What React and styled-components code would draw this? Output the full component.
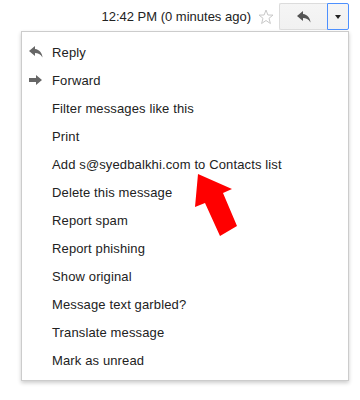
import React from "react";
import styled, { createGlobalStyle } from "styled-components";

const GlobalStyle = createGlobalStyle`
  html, body {
    margin: 0;
    padding: 0;
    background: #ffffff;
  }
  body {
    font-family: "Liberation Sans", Arial, sans-serif;
    font-size: 13px;
    color: #222222;
  }
`;

const Page = styled.div`
  position: relative;
  width: 360px;
  height: 400px;
  overflow: hidden;
`;

const Header = styled.div`
  display: flex;
  align-items: center;
  justify-content: flex-end;
  height: 27px;
  padding: 3px 11px 0 0;
`;

const Time = styled.span`
  font-size: 13px;
  color: #222222;
  margin-right: 7px;
`;

const StarBox = styled.span`
  display: flex;
  width: 16px;
  height: 16px;
  margin-right: 5px;
`;

const BtnGroup = styled.div`
  display: flex;
  height: 27px;
`;

const Btn = styled.button`
  display: flex;
  align-items: center;
  justify-content: center;
  width: ${(p) => p.$w}px;
  height: 27px;
  padding: 0;
  margin: 0;
  box-sizing: border-box;
  background: linear-gradient(#f5f5f5, #f1f1f1);
  border: 1px solid ${(p) => (p.$focus ? "#4d90fe" : "#dcdcdc")};
  border-radius: ${(p) => (p.$focus ? "0 2px 2px 0" : "2px 0 0 2px")};
  ${(p) => (p.$focus ? "" : "border-right: none;")}
`;

const Caret = styled.span`
  width: 0;
  height: 0;
  border-left: 3.5px solid transparent;
  border-right: 3.5px solid transparent;
  border-top: 4px solid #222;
`;

const Menu = styled.div`
  margin: 1px 0 0 21px;
  width: 328px;
  box-sizing: border-box;
  padding: 6px 0;
  background: #ffffff;
  border: 1px solid rgba(0, 0, 0, 0.2);
  box-shadow: 0 2px 4px rgba(0, 0, 0, 0.2);
`;

const Item = styled.div`
  display: flex;
  align-items: center;
  height: 28px;
  padding-left: 7px;
  color: #222222;
  font-size: 13px;
  letter-spacing: 0.13px;
  white-space: nowrap;
`;

const IconSlot = styled.span`
  display: flex;
  align-items: center;
  width: 23px;
  height: 28px;
`;

const Arrow = styled.svg`
  position: absolute;
  left: 0;
  top: 0;
  pointer-events: none;
`;

const ReplyIcon = ({ color = "#666" }) => (
  <svg width="14" height="12" viewBox="0 0 14 12">
    <path
      d="M6 0 L0 5 L6 10 L6 7 C9 7 11.5 8 13.5 11.5 C13 7 10.5 3.5 6 3 Z"
      fill={color}
    />
  </svg>
);

const ForwardIcon = () => (
  <svg width="13" height="10" viewBox="0 0 13 10">
    <path d="M0 3 L7 3 L7 0 L13 5 L7 10 L7 7 L0 7 Z" fill="#666" />
  </svg>
);

const items = [
  { label: "Reply", icon: <ReplyIcon /> },
  { label: "Forward", icon: <ForwardIcon /> },
  { label: "Filter messages like this" },
  { label: "Print" },
  { label: "Add s@syedbalkhi.com to Contacts list" },
  { label: "Delete this message" },
  { label: "Report spam" },
  { label: "Report phishing" },
  { label: "Show original" },
  { label: "Message text garbled?" },
  { label: "Translate message" },
  { label: "Mark as unread" },
];

export default function App() {
  return (
    <Page>
      <GlobalStyle />
      <Header>
        <Time>12:42 PM (0 minutes ago)</Time>
        <StarBox>
          <svg width="16" height="16" viewBox="0 0 16 16">
            <path
              d="M8 1 L9.9 6 L15 6.1 L11 9.3 L12.4 14.5 L8 11.5 L3.6 14.5 L5 9.3 L1 6.1 L6.1 6 Z"
              fill="none"
              stroke="#c8c8c8"
              strokeWidth="1"
            />
          </svg>
        </StarBox>
        <BtnGroup>
          <Btn $w={48}>
            <ReplyIcon color="#555" />
          </Btn>
          <Btn $w={22} $focus>
            <Caret />
          </Btn>
        </BtnGroup>
      </Header>
      <Menu>
        {items.map((it) => (
          <Item key={it.label}>
            <IconSlot>{it.icon}</IconSlot>
            {it.label}
          </Item>
        ))}
      </Menu>
      <Arrow width="360" height="400" viewBox="0 0 360 400">
        <path
          d="M198 174 L195 207 L205 203 L220 236 L237 226 L223 193 L232 189 Z"
          fill="#ff0000"
        />
      </Arrow>
    </Page>
  );
}
